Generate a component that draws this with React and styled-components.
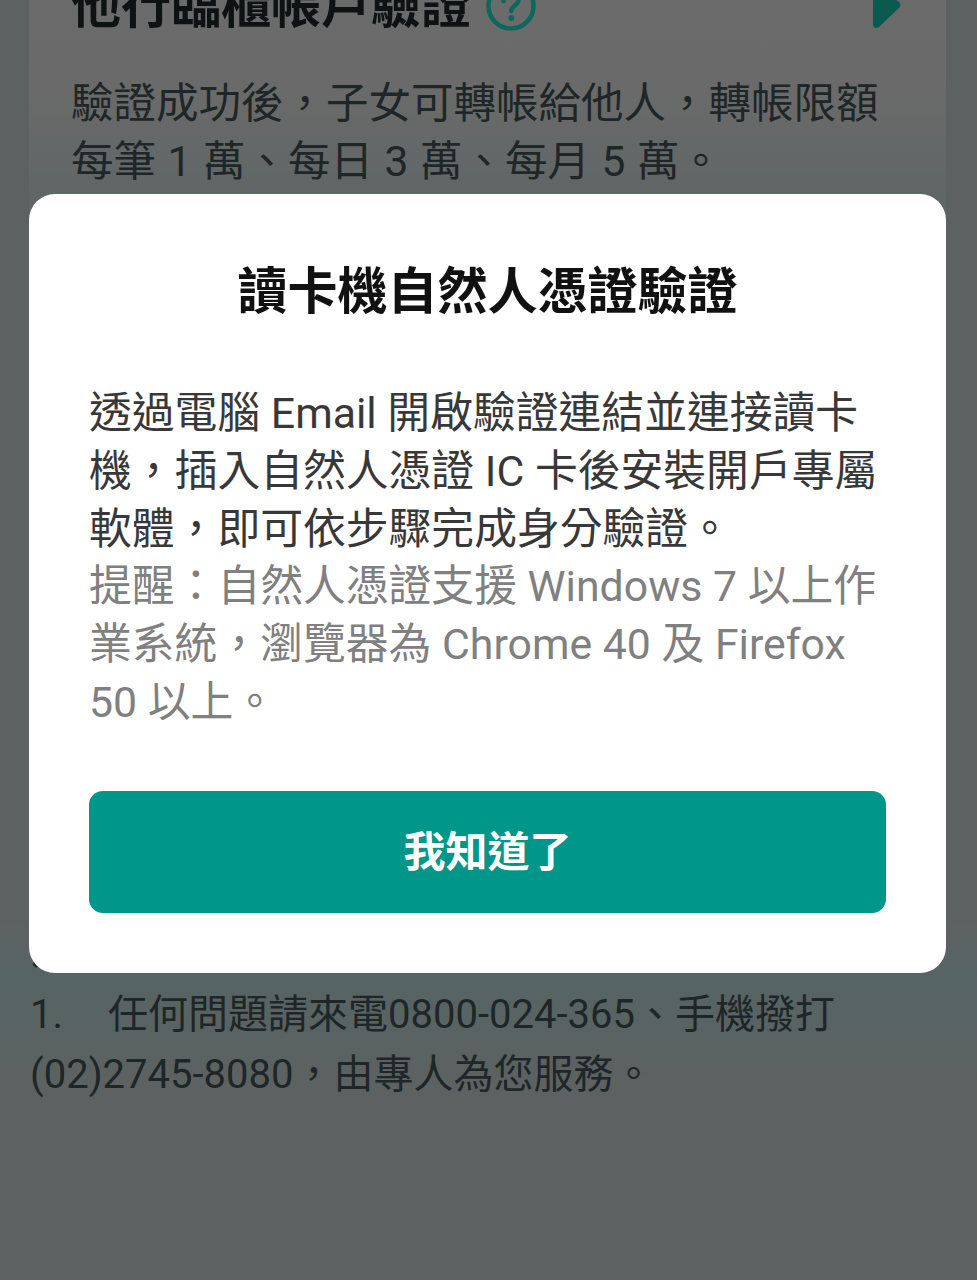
import React from 'react'
import styled, {createGlobalStyle} from 'styled-components'

const GlobalStyle = createGlobalStyle`
    html, body {
        margin: 0;
        padding: 0;
        background: #5d6262;
    }
    body {
        font-family: Roboto, "Noto Sans CJK TC", sans-serif;
    }
`

const App = () => {
    return (
        <Page>
            <GlobalStyle />
            <Card>
                <CardHead>
                    <CardTitle>他行臨櫃帳戶驗證</CardTitle>
                    <HelpIcon viewBox="0 0 50 50" fill="none">
                        <circle cx="25" cy="25" r="22.5" stroke="#0d675d" strokeWidth="4.5" />
                        <path d="M17.5 20c0-4.5 3.3-7.3 7.6-7.3 4.2 0 7.4 2.6 7.4 6.3 0 5.6-7.3 5.4-7.3 11" stroke="#0d675d" strokeWidth="4.5" strokeLinecap="round" />
                        <circle cx="25.2" cy="37" r="3" fill="#0d675d" />
                    </HelpIcon>
                    <Arrow viewBox="0 0 30 46">
                        <path d="M1 4 Q1 0 4 1 L27 19 Q30 22 27 25 L7 44 Q1 47 1 41 Z" fill="#0a5a50" />
                    </Arrow>
                </CardHead>
                <CardText>
                    驗證成功後，子女可轉帳給他人，轉帳限額
                    <br />
                    每筆 1 萬、每日 3 萬、每月 5 萬。
                </CardText>
            </Card>
            <Notes>
                <NoteHead>注意事項</NoteHead>
                <NoteRow>
                    <NoteNum>1.</NoteNum>任何問題請來電0800-024-365、手機撥打
                </NoteRow>
                <NoteRow>(02)2745-8080，由專人為您服務。</NoteRow>
            </Notes>
            <Modal>
                <ModalTitle>讀卡機自然人憑證驗證</ModalTitle>
                <ModalText>
                    透過電腦 Email 開啟驗證連結並連接讀卡機，插入自然人憑證 IC 卡後安裝開戶專屬軟體，即可依步驟完成身分驗證。
                    <Hint>提醒：自然人憑證支援 Windows 7 以上作業系統，瀏覽器為 Chrome 40 及 Firefox 50 以上。</Hint>
                </ModalText>
                <OkButton>我知道了</OkButton>
            </Modal>
        </Page>
    )
}

const Page = styled.div`
    position: relative;
    width: 977px;
    height: 1280px;
    overflow: hidden;
    background: #5d6161;
    color: #1f2627;
`

const Card = styled.div`
    height: 950px;
    margin: -24px 31px 0 29px;
    padding: 0 42px;
    box-sizing: border-box;
    background: linear-gradient(#6b6b6b 0, #6a6a6a 120px, #5f6666 220px);
`

const CardHead = styled.div`
    display: flex;
    align-items: center;
    height: 60px;
`

const CardTitle = styled.div`
    font-size: 50px;
    font-weight: 700;
    line-height: 60px;
    color: #0f1212;
    white-space: nowrap;
`

const HelpIcon = styled.svg`
    width: 50px;
    height: 50px;
    margin-left: 15px;
`

const Arrow = styled.svg`
    width: 30px;
    height: 46px;
    margin: 0 2px 0 auto;
`

const CardText = styled.div`
    margin-top: 39px;
    font-size: 42.5px;
    line-height: 58px;
    word-spacing: 1px;
    white-space: nowrap;
`

const Notes = styled.div`
    padding-left: 30px;
    font-size: 40px;
    line-height: 60px;
    white-space: nowrap;
    background: linear-gradient(#5d6262 0, #566464 50px, #5d6161 170px);
`

const NoteHead = styled.div`
    height: 59px;
    line-height: 50px;
    font-weight: 700;
`

const NoteRow = styled.div`
    display: flex;
`

const NoteNum = styled.span`
    width: 78px;
`

const Modal = styled.div`
    position: absolute;
    top: 194px;
    left: 29px;
    width: 917px;
    height: 779px;
    box-sizing: border-box;
    padding: 68px 60px 0;
    background: #fff;
    border-radius: 26px;
`

const ModalTitle = styled.h2`
    margin: 0;
    font-size: 50px;
    line-height: 60px;
    font-weight: 700;
    color: #111;
    text-align: center;
`

const ModalText = styled.div`
    margin-top: 63px;
    font-size: 42.8px;
    line-height: 57.8px;
    color: #383838;
`

const Hint = styled.div`
    color: #808080;
`

const OkButton = styled.button`
    display: block;
    width: 100%;
    height: 122px;
    margin-top: 59px;
    padding: 0 0 7px;
    border: 0;
    border-radius: 14px;
    background: #00968a;
    color: #fff;
    font-family: inherit;
    font-size: 42px;
    font-weight: 700;
`

export default App
